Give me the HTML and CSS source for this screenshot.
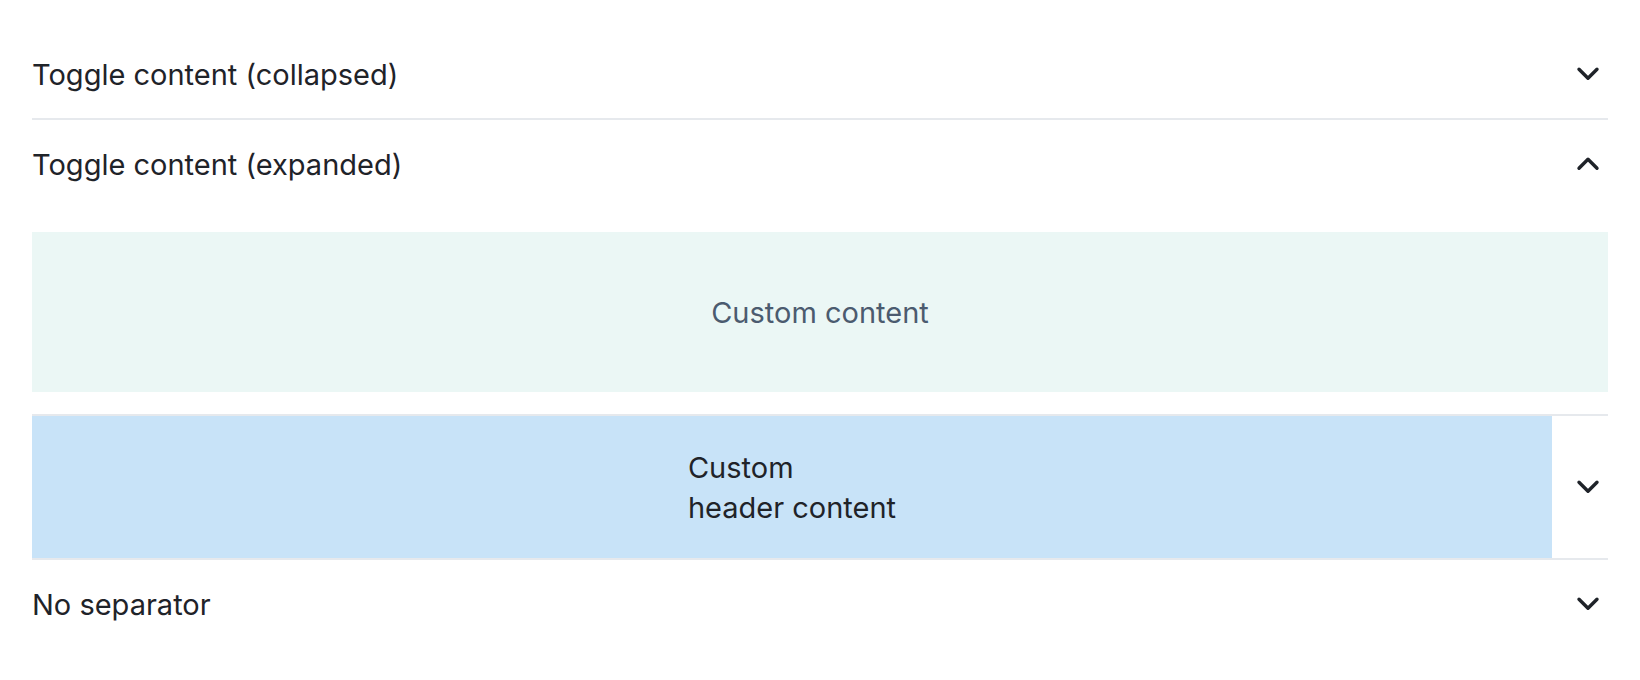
FILE: index.html
```html
<!DOCTYPE html>
<html lang="en">
<head>
<meta charset="utf-8">
<title>Accordion</title>
<link rel="stylesheet" href="styles.css">
</head>
<body>
<div class="accordion">
  <div class="item">
    <div class="header">
      <div class="title">Toggle content (collapsed)</div>
      <div class="toggle">
        <svg class="chev" viewBox="0 0 16 16" width="32" height="32"><polyline points="3.5,5.6 8,10.1 12.5,5.6"/></svg>
      </div>
    </div>
  </div>
  <div class="item">
    <div class="header">
      <div class="title">Toggle content (expanded)</div>
      <div class="toggle">
        <svg class="chev" viewBox="0 0 16 16" width="32" height="32"><polyline points="3.5,10.1 8,5.6 12.5,10.1"/></svg>
      </div>
    </div>
    <div class="panel">
      <div class="panel-box">Custom content</div>
    </div>
  </div>
  <div class="item">
    <div class="header custom">
      <div class="title custom-title"><div class="custom-text">Custom<br>header content</div></div>
      <div class="toggle">
        <svg class="chev" viewBox="0 0 16 16" width="32" height="32"><polyline points="3.5,5.6 8,10.1 12.5,5.6"/></svg>
      </div>
    </div>
  </div>
  <div class="item no-sep">
    <div class="header">
      <div class="title">No separator</div>
      <div class="toggle">
        <svg class="chev" viewBox="0 0 16 16" width="32" height="32"><polyline points="3.5,5.6 8,10.1 12.5,5.6"/></svg>
      </div>
    </div>
  </div>
</div>
</body>
</html>
```
FILE: styles.css
```css
html, body {
  margin: 0;
  background: #ffffff;
}
body {
  padding: 30px 32px;
  font-family: Inter, "Liberation Sans", sans-serif;
  color: #1f2329;
}
.accordion {
  display: flex;
  flex-direction: column;
}
.item {
  border-bottom: 2px solid #e6e9ed;
}
.item.no-sep {
  border-bottom: none;
}
.header {
  display: flex;
  align-items: stretch;
  min-height: 88px;
}
.title {
  flex: 1;
  display: flex;
  align-items: center;
  font-size: 29px;
  line-height: 40px;
  padding-top: 1px;
}
.toggle {
  width: 56px;
  display: flex;
  align-items: center;
  justify-content: flex-end;
  padding-right: 4px;
  box-sizing: border-box;
}
.chev {
  display: block;
  fill: none;
  stroke: #1f2329;
  stroke-width: 1.7;
  stroke-linecap: round;
  stroke-linejoin: round;
}
.panel {
  padding: 24px 0 22px;
}
.panel-box {
  height: 160px;
  background: #ebf7f5;
  display: flex;
  align-items: center;
  justify-content: center;
  font-size: 29px;
  color: #4b5b6f;
}
.header.custom {
  min-height: 142px;
}
.custom-title {
  background: #c8e3f8;
  justify-content: center;
  padding-top: 2px;
}
.custom-text {
  text-align: left;
}
```
